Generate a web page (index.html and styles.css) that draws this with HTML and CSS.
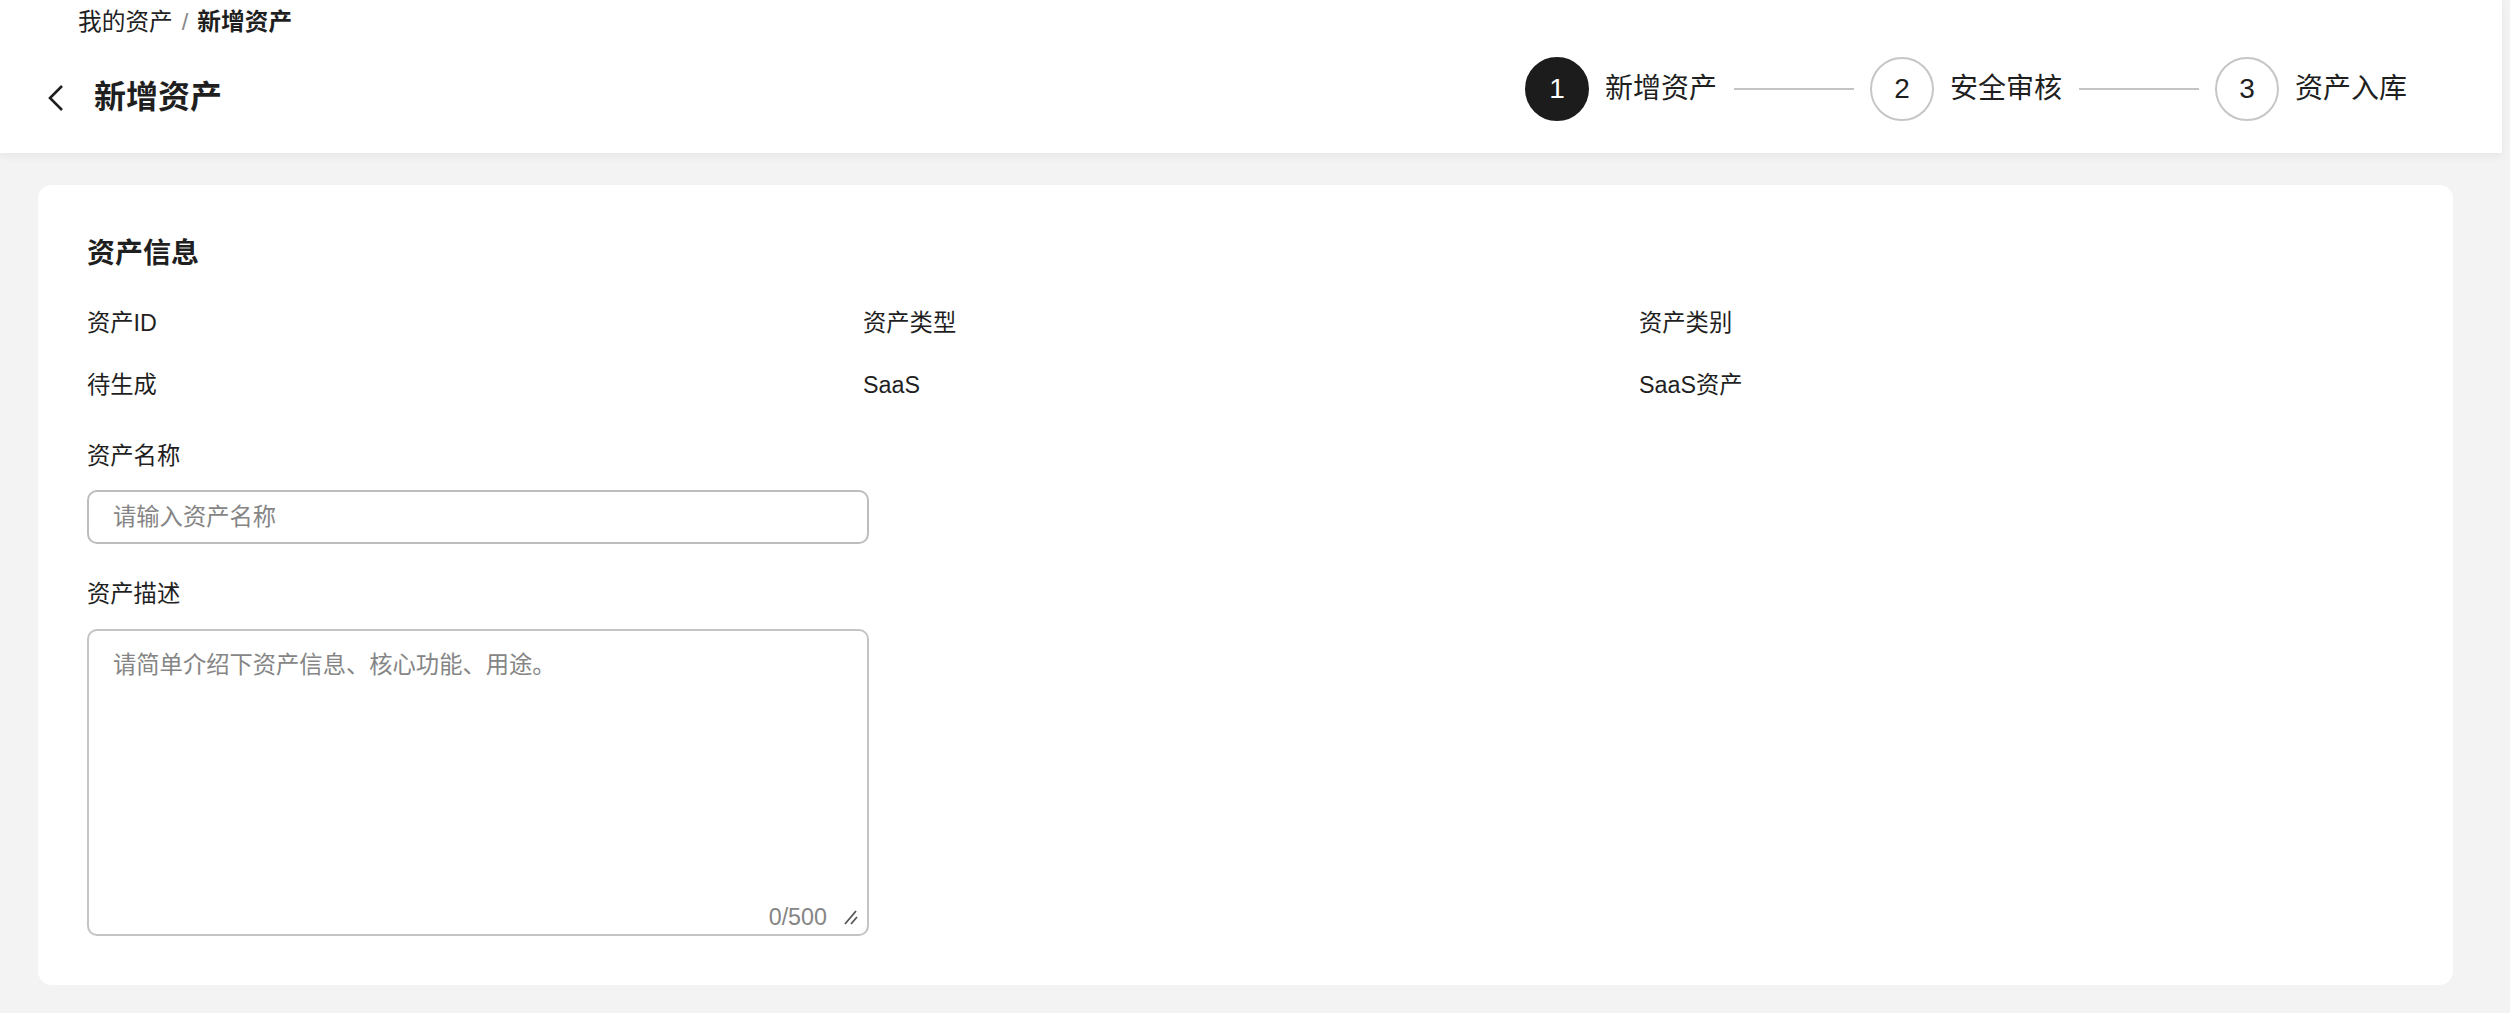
FILE: index.html
```html
<!DOCTYPE html>
<html lang="zh-CN">
  <head>
    <meta charset="UTF-8" />
    <meta name="viewport" content="width=device-width, initial-scale=1.0" />
    <title>新增资产</title>
    <link rel="stylesheet" href="styles.css">
  </head>
  <body>
    <div class="topbar">
      <div class="topbar-left">
        <div class="crumbs">
          <span>我的资产</span>
          <span class="crumb-sep">/</span>
          <span class="crumb-current">新增资产</span>
        </div>
        <div class="title-row">
          <svg class="back" width="18" height="28" viewBox="0 0 18 28">
            <polyline points="15,2 3,14 15,26" fill="none" stroke="#1f1f1f" stroke-width="2.6" />
          </svg>
          <h1 class="page-title">新增资产</h1>
        </div>
      </div>
      <div class="steps">
        <div class="step active">
          <span class="step-num">1</span>
          <span class="step-label">新增资产</span>
        </div>
        <span class="step-line"></span>
        <div class="step">
          <span class="step-num">2</span>
          <span class="step-label">安全审核</span>
        </div>
        <span class="step-line"></span>
        <div class="step">
          <span class="step-num">3</span>
          <span class="step-label">资产入库</span>
        </div>
      </div>
    </div>

    <div class="main">
      <div class="card">
        <h2 class="card-title">资产信息</h2>
        <div class="info-grid">
          <div class="info-label">资产ID</div>
          <div class="info-label">资产类型</div>
          <div class="info-label">资产类别</div>
          <div class="info-value">待生成</div>
          <div class="info-value">SaaS</div>
          <div class="info-value">SaaS资产</div>
        </div>

        <label class="field-label" for="assetName">资产名称</label>
        <input class="text-input" id="assetName" type="text" placeholder="请输入资产名称" />

        <label class="field-label desc-label" for="assetDesc">资产描述</label>
        <div class="textarea-box">
          <textarea id="assetDesc" class="text-area" placeholder="请简单介绍下资产信息、核心功能、用途。"></textarea>
          <div class="textarea-foot">
            <span class="counter">0/500</span>
            <svg class="grip" width="14" height="16" viewBox="0 0 14 16">
              <line x1="1" y1="15" x2="12" y2="2" stroke="#555" stroke-width="1.8" />
              <line x1="7" y1="15" x2="13" y2="8" stroke="#555" stroke-width="1.8" />
            </svg>
          </div>
        </div>
      </div>
    </div>
  </body>
</html>
```

FILE: styles.css
```css
* {
  box-sizing: border-box;
}
body {
  margin: 0;
  padding-right: 8px;
  background-color: #f3f3f3;
  color: #1f1f1f;
  font-family: "Liberation Sans", "Noto Sans CJK SC", sans-serif;
  font-size: 23.3px;
}
.topbar {
  height: 153px;
  background-color: #fff;
  box-shadow: 0 3px 8px rgba(0, 0, 0, 0.06);
  display: flex;
  justify-content: space-between;
  padding: 4px 96px 0 47px;
}
.crumbs {
  margin-left: 31px;
  font-size: 23.7px;
  line-height: 36px;
  height: 36px;
  display: flex;
  gap: 9px;
}
.crumb-sep {
  color: #8a8a8a;
}
.crumb-current {
  font-weight: bold;
}
.title-row {
  margin-top: 33px;
  display: flex;
  align-items: center;
  height: 48px;
}
.back {
  margin-top: 2px;
}
.page-title {
  margin: 0 0 0 29px;
  font-size: 32px;
  line-height: 48px;
  font-weight: bold;
}
.steps {
  display: flex;
  align-items: center;
  margin-top: 53px;
  margin-right: -1px;
  height: 64px;
}
.step {
  display: flex;
  align-items: center;
  gap: 16px;
}
.step-num {
  width: 64px;
  height: 64px;
  border-radius: 50%;
  border: 2px solid #c6c6c6;
  display: flex;
  justify-content: center;
  align-items: center;
  font-size: 28px;
}
.step.active .step-num {
  background-color: #1c1c1c;
  border-color: #1c1c1c;
  color: #fff;
}
.step-label {
  font-size: 28px;
  line-height: 40px;
}
.step-line {
  width: 120px;
  height: 2px;
  background-color: #c4c4c4;
  margin: 0 16px 0 17px;
}
.main {
  padding: 32px 49px 28px 38px;
}
.card {
  background-color: #fff;
  border-radius: 14px;
  padding: 49px 38px 49px 49px;
}
.card-title {
  margin: 0;
  font-size: 28px;
  line-height: 40px;
  font-weight: bold;
}
.info-grid {
  margin-top: 31px;
  display: grid;
  grid-template-columns: 1fr 1fr 1fr;
  row-gap: 26px;
  line-height: 36px;
}
.field-label {
  display: block;
  margin-top: 35px;
  line-height: 36px;
}
.desc-label {
  margin-top: 32px;
}
.text-input {
  display: block;
  margin-top: 16px;
  width: 782px;
  height: 54px;
  border: 2px solid #bdbdbd;
  border-radius: 10px;
  padding: 0 24px;
  font-family: inherit;
  font-size: 23.3px;
  color: #1f1f1f;
  outline: none;
}
.text-input::placeholder,
.text-area::placeholder {
  color: #858585;
}
.textarea-box {
  margin-top: 17px;
  width: 782px;
  height: 307px;
  border: 2px solid #c4c4c4;
  border-radius: 10px;
  display: flex;
  flex-direction: column;
}
.text-area {
  flex: 1;
  border: none;
  resize: none;
  outline: none;
  background: transparent;
  padding: 16px 24px 0 24px;
  font-family: inherit;
  font-size: 23.3px;
  line-height: 36px;
  color: #1f1f1f;
}
.textarea-foot {
  display: flex;
  justify-content: flex-end;
  align-items: center;
  gap: 17px;
  padding: 0 9px 0 0;
  height: 34px;
}
.counter {
  color: #858585;
  line-height: 30px;
}
```
